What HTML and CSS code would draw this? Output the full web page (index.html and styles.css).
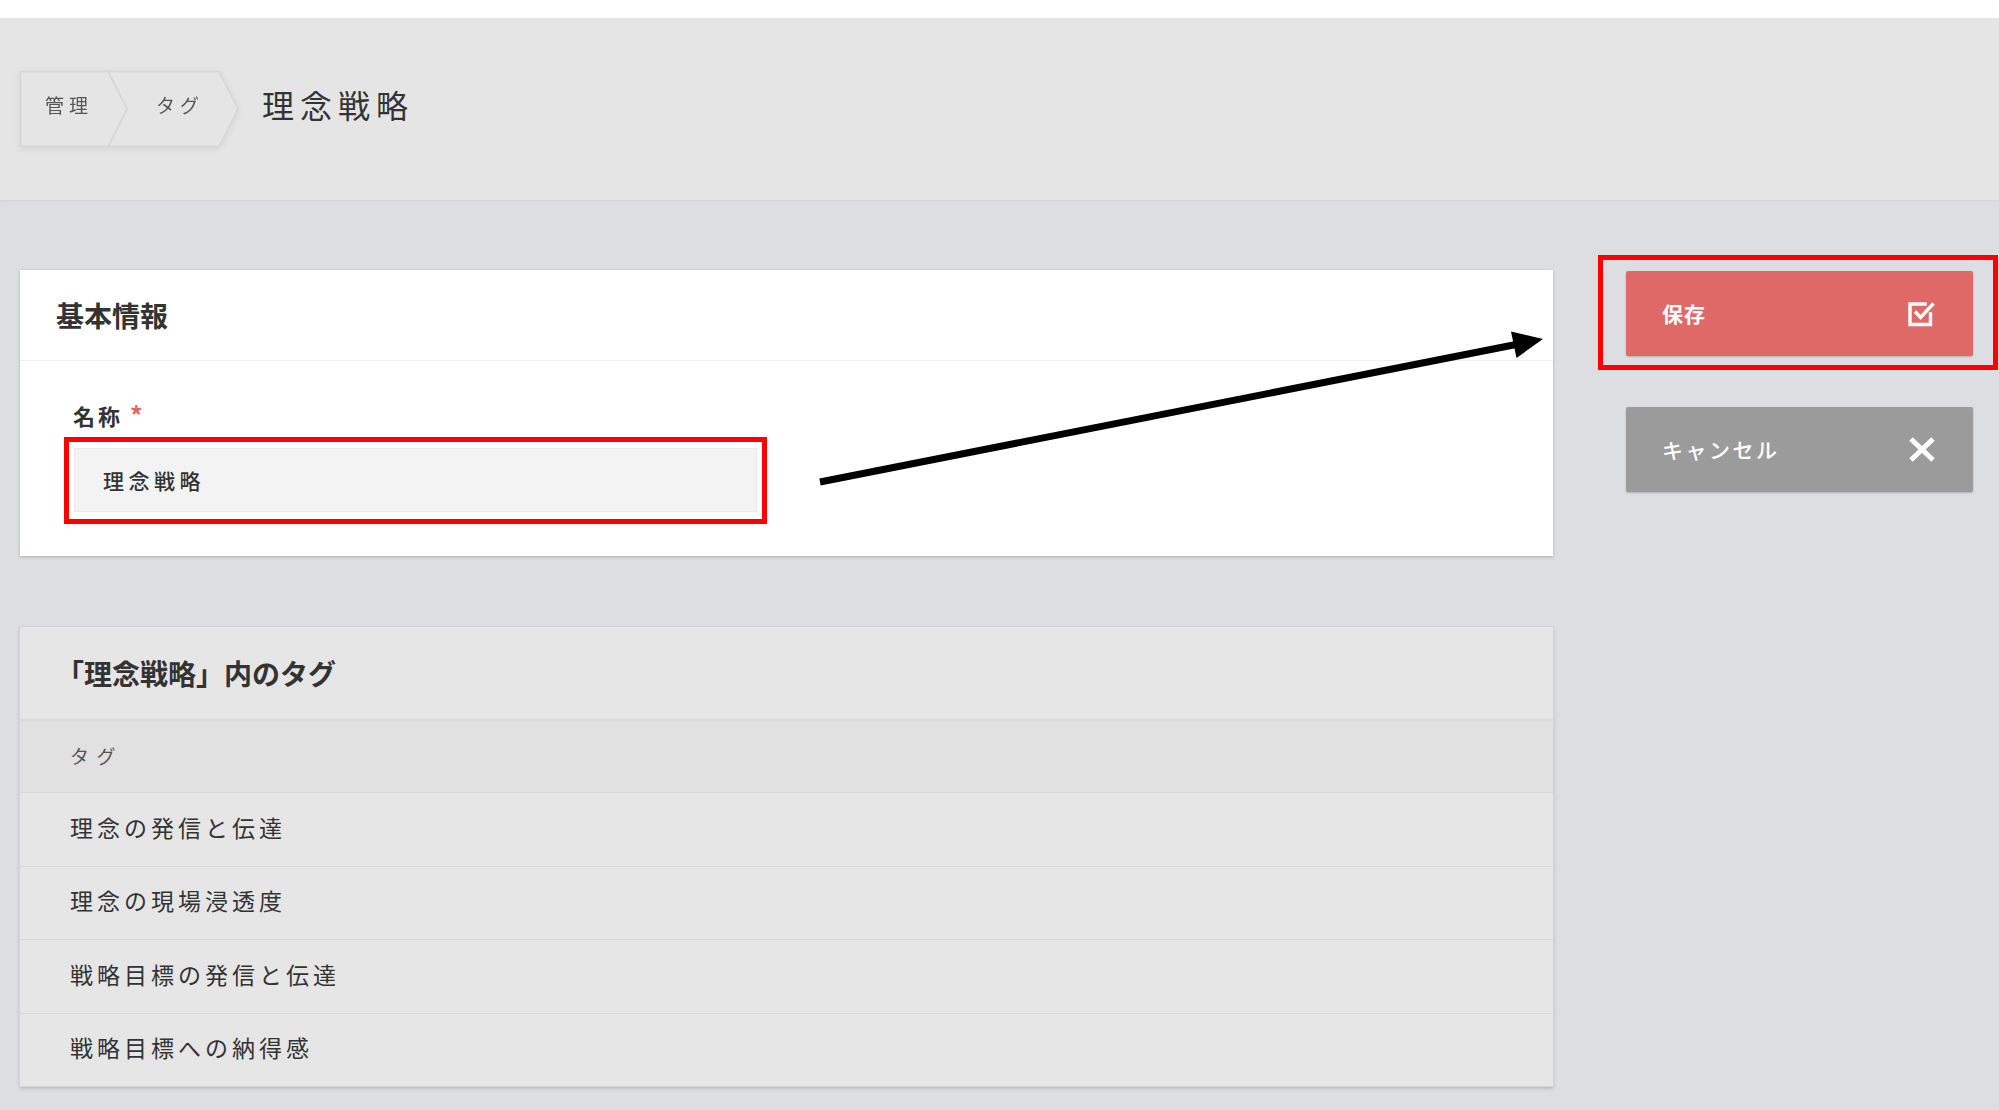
FILE: index.html
```html
<!DOCTYPE html>
<html lang="ja">
<head>
<meta charset="utf-8">
<title>理念戦略</title>
<link rel="stylesheet" href="styles.css">
</head>
<body>
<div class="topbar"></div>
<header class="page-header">
  <nav class="breadcrumb">
    <a class="crumb crumb-1">
      <svg class="crumb-shape" width="110" height="76" viewBox="0 0 110 76"><polygon points="0.5,0.5 88,0.5 107,38 88,75.5 0.5,75.5" /></svg>
      <span class="crumb-text">管理</span>
    </a>
    <a class="crumb crumb-2">
      <svg class="crumb-shape" width="133" height="76" viewBox="0 0 133 76"><polygon points="0,0.5 111,0.5 130,38 111,75.5 0,75.5 19,38" /></svg>
      <span class="crumb-text">タグ</span>
    </a>
  </nav>
  <h1 class="page-title">理念戦略</h1>
</header>

<main class="content">
  <div class="main-col">
    <section class="card card-basic">
      <div class="card-head"><h2 class="card-title">基本情報</h2></div>
      <div class="card-body">
        <label class="field-label">名称<span class="req">*</span></label>
        <div class="annot annot-input">
          <div class="text-input">理念戦略</div>
        </div>
      </div>
    </section>

    <section class="card card-tags">
      <div class="card-head"><h2 class="card-title">「理念戦略」内のタグ</h2></div>
      <div class="table-head">タグ</div>
      <div class="table-row">理念の発信と伝達</div>
      <div class="table-row">理念の現場浸透度</div>
      <div class="table-row">戦略目標の発信と伝達</div>
      <div class="table-row">戦略目標への納得感</div>
    </section>
  </div>

  <aside class="side-col">
    <div class="annot annot-save">
      <button class="btn btn-save">
        <span class="btn-label">保存</span>
        <svg class="btn-icon" width="28" height="26" viewBox="0 0 28 26" fill="none" stroke="#fff" stroke-width="3.4">
          <path d="M22.5 13 V23.5 H2 V3 H17" stroke-linecap="square"/>
          <path d="M7 10.5 L12.5 16.5 L25.5 2.5"/>
        </svg>
      </button>
    </div>
    <button class="btn btn-cancel">
      <span class="btn-label">キャンセル</span>
      <svg class="btn-icon" width="28" height="27" viewBox="0 0 28 27" fill="none" stroke="#fff" stroke-width="5">
        <path d="M3 3 L25 24 M25 3 L3 24"/>
      </svg>
    </button>
  </aside>
</main>

<svg class="arrow-overlay" width="1999" height="1110" viewBox="0 0 1999 1110">
  <line x1="820" y1="482" x2="1516" y2="344.5" stroke="#000" stroke-width="7"/>
  <polygon points="1543,339 1511,331.5 1516.5,358" fill="#000"/>
</svg>
</body>
</html>
```

FILE: styles.css
```css
* { box-sizing: border-box; }

html, body {
  margin: 0;
  padding: 0;
}

body {
  background: #dddee2;
  font-family: "Noto Sans CJK JP", "Noto Sans", sans-serif;
  color: #333;
  position: relative;
  min-height: 1110px;
  overflow: hidden;
}

.topbar {
  height: 18px;
  background: #ffffff;
}

.page-header {
  height: 182px;
  background: #e5e5e5;
  display: flex;
  align-items: center;
  padding-left: 20px;
  box-shadow: 0 1px 2px rgba(0, 0, 0, 0.06);
}

.breadcrumb {
  display: flex;
  height: 76px;
  filter: drop-shadow(0 2px 3px rgba(0, 0, 0, 0.07));
}

.crumb {
  position: relative;
  height: 76px;
  display: flex;
  align-items: center;
  padding-bottom: 10px;
  color: #555;
  font-size: 19px;
  letter-spacing: 5px;
  line-height: 1;
}

.crumb-1 { width: 88px; padding-left: 25px; z-index: 2; }
.crumb-2 { width: 111px; padding-left: 48px; z-index: 1; }

.crumb-shape {
  position: absolute;
  left: 0;
  top: 0;
  overflow: visible;
}

.crumb-shape polygon {
  fill: #e5e5e5;
  stroke: #d6d6d6;
  stroke-width: 1.5;
}

.crumb-text {
  position: relative;
}

.page-title {
  margin: 0 0 10px 43px;
  font-size: 32px;
  font-weight: 400;
  letter-spacing: 6px;
  color: #333;
  line-height: 1;
}

.content {
  display: flex;
  padding: 70px 0 0 20px;
  gap: 45px;
}

.main-col {
  width: 1533px;
  flex: none;
}

.card {
  box-shadow: 0 1px 3px rgba(0, 0, 0, 0.22);
}

.card-basic {
  background: #ffffff;
}

.card-head {
  height: 91px;
  display: flex;
  align-items: center;
  padding-left: 36px;
  border-bottom: 1px solid #efefef;
}

.card-title {
  margin: 0;
  font-size: 28px;
  font-weight: 700;
  color: #333;
  line-height: 1;
}

.card-body {
  padding: 40px 0 32px 44px;
}

.field-label {
  display: block;
  margin-left: 9px;
  margin-bottom: 6px;
  height: 30px;
  line-height: 26px;
  font-size: 22px;
  font-weight: 700;
  letter-spacing: 3px;
  color: #333;
}

.req {
  color: #e06666;
  margin-left: 7px;
  font-size: 25px;
}

.annot {
  border: 5px solid #ff0000;
  background: #ffffff;
}

.annot-input {
  width: 703px;
  padding: 6px 5px 7px 5px;
}

.text-input {
  height: 64px;
  background: #f3f3f3;
  border: 1px solid #ebebeb;
  display: flex;
  align-items: center;
  padding-left: 28px;
  font-size: 21px;
  font-weight: 500;
  letter-spacing: 4.5px;
  color: #333;
}

.card-tags {
  margin-top: 71px;
  background: #e6e6e6;
  box-shadow: 0 0 0 1px #d4d4d4, 0 2px 4px rgba(0, 0, 0, 0.22);
}

.card-tags .card-head {
  height: 92px;
  border-bottom: none;
}

.table-head {
  height: 73px;
  background: #e1e1e1;
  border-top: 2px solid #dadada;
  display: flex;
  align-items: center;
  padding-left: 50px;
  padding-bottom: 2px;
  font-size: 19px;
  letter-spacing: 0.4em;
  color: #555;
}

.table-row {
  height: 73.5px;
  border-top: 1px solid #d9d9d9;
  display: flex;
  align-items: center;
  padding-left: 50px;
  padding-bottom: 5px;
  font-size: 23px;
  letter-spacing: 4px;
  color: #333;
}

.side-col {
  width: 400px;
  flex: none;
  margin-top: -15px;
  display: flex;
  flex-direction: column;
}

.annot-save {
  width: 400px;
  padding: 11px 20px 9px 23px;
  background: transparent;
}

.btn {
  width: 347px;
  height: 85px;
  border: none;
  border-radius: 2px;
  display: flex;
  align-items: center;
  justify-content: space-between;
  padding: 0 37px 0 36px;
  color: #ffffff;
  font-family: "Noto Sans CJK JP", "Noto Sans", sans-serif;
  font-size: 21px;
  line-height: 1;
  box-shadow: 0 1px 2px rgba(0, 0, 0, 0.2);
}

.btn-save {
  background: #df6967;
  font-weight: 700;
  letter-spacing: 1px;
}

.btn-cancel {
  background: #9b9b9b;
  margin: 37px 0 0 28px;
  font-weight: 500;
  letter-spacing: 2.5px;
}

.btn-icon { display: block; }

.arrow-overlay {
  position: absolute;
  left: 0;
  top: 0;
  pointer-events: none;
}
```
